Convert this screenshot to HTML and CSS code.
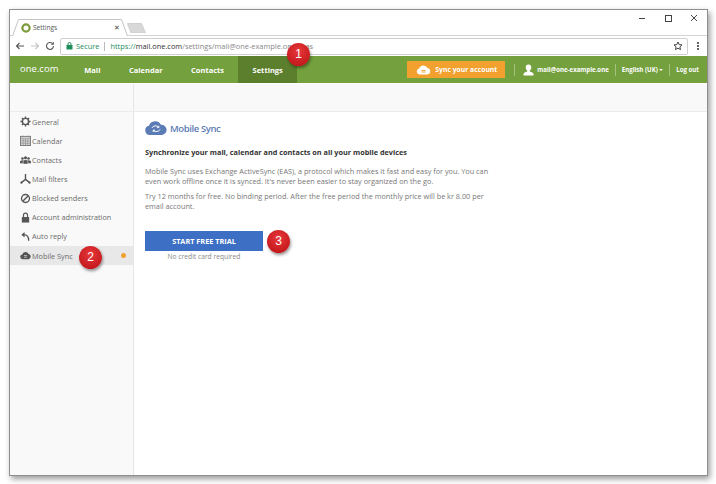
FILE: index.html
```html
<!DOCTYPE html>
<html>
<head>
  <meta charset="utf-8">
  <title>Settings</title>
  <link rel="stylesheet" href="styles.css">
</head>
<body>
  <div class="window">

    <!-- browser tabs -->
    <div class="titlebar">
      <div class="tab">
        <svg class="tab-shape" width="116" height="17" viewBox="0 0 116 17"><path d="M0.500 17L6.500 0.500H109.500L115.500 17" fill="#fff" stroke="#c4c4c4"/></svg>
        <svg class="tab-icon" width="10" height="10" viewBox="0 0 10 10"><circle cx="5" cy="5" r="3.600" fill="none" stroke="#7a9a3c" stroke-width="2.200"/></svg>
        <span class="tab-title">Settings</span>
        <span class="tab-close">&#10005;</span>
      </div>
      <svg class="tab-new" width="19" height="10" viewBox="0 0 19 10"><path d="M4 10L0.500 0.500H14.500L18.500 10z" fill="#d8d8d8" stroke="#cfcfcf"/></svg>
      <div class="win-controls">
        <svg width="8" height="8" viewBox="0 0 8 8"><path d="M1 4.500h6" stroke="#444" fill="none"/></svg>
        <svg width="8" height="8" viewBox="0 0 8 8"><rect x="1.500" y="1.500" width="6" height="6" stroke="#444" fill="none"/></svg>
        <svg width="8" height="8" viewBox="0 0 8 8"><path d="M1 1l6 6M7 1l-6 6" stroke="#444" fill="none"/></svg>
      </div>
    </div>

    <!-- address bar -->
    <div class="toolbar">
      <svg class="tool-icon" width="10" height="10" viewBox="0 0 10 10"><path d="M9 5H1.500M4.500 2L1.500 5l3 3" stroke="#555" stroke-width="1.100" fill="none"/></svg>
      <svg class="tool-icon" width="10" height="10" viewBox="0 0 10 10"><path d="M1 5h7.500M5.500 2l3 3-3 3" stroke="#c4c4c4" stroke-width="1.100" fill="none"/></svg>
      <svg class="tool-icon" width="10" height="10" viewBox="0 0 10 10"><path d="M8.500 5A3.500 3.500 0 1 1 7.400 2.400" stroke="#555" stroke-width="1.100" fill="none"/><path d="M8.800 0.800v3H5.800z" fill="#555"/></svg>
      <div class="omnibox">
        <svg width="7" height="8" viewBox="0 0 7 8"><rect x="0.500" y="3" width="6" height="4.500" fill="#1e8e5a"/><path d="M2 3V2a1.500 1.500 0 0 1 3 0v1" stroke="#1e8e5a" fill="none"/></svg>
        <span class="secure">Secure</span>
        <span class="omni-sep"></span>
        <span class="url"><span class="scheme">https://</span><span class="host">mail.one.com</span>/settings/mail@one-example.one/mas</span>
        <svg class="star" width="10" height="10" viewBox="0 0 10 10"><path d="M5 1l1.200 2.600 2.800.3-2.100 1.900.6 2.800L5 7.200 2.500 8.600l.6-2.800L1 3.900l2.800-.3z" stroke="#444" fill="none"/></svg>
      </div>
      <div class="menu-dots"><i></i><i></i><i></i></div>
    </div>

    <!-- green app nav -->
    <div class="appnav">
      <div class="logo">one.com</div>
      <a class="nav-item">Mail</a>
      <a class="nav-item">Calendar</a>
      <a class="nav-item">Contacts</a>
      <a class="nav-item active">Settings</a>
      <div class="nav-right">
        <div class="sync-btn">
          <svg width="15" height="11" viewBox="0 0 15 11"><path d="M3.500 10.500a3 3 0 0 1-.4-5.900A4.500 4.500 0 0 1 11.500 4a3.300 3.300 0 0 1 0 6.500z" fill="#fff"/><path d="M5.500 6.500h4M5.500 8h4" stroke="#f2a02e" stroke-width="0.900"/></svg>
          <span>Sync your account</span>
        </div>
        <span class="nav-sep first"></span>
        <svg class="user-icon" width="11" height="12" viewBox="0 0 11 12"><path d="M5.500 0.500c1.800 0 2.800 1.300 2.800 3 0 1.300-.7 2.500-1.500 3.100v.9c1.700.5 3.700 1.200 3.700 2.500v1.500H0.500V10c0-1.300 2-2 3.700-2.500v-.9C3.400 6 2.700 4.800 2.700 3.500c0-1.700 1-3 2.800-3z" fill="#fff"/></svg>
        <span class="nav-link user">mail@one-example.one</span>
        <span class="nav-sep"></span>
        <span class="nav-link">English (UK) <span class="caret"></span></span>
        <span class="nav-sep"></span>
        <span class="nav-link">Log out</span>
      </div>
    </div>

    <div class="subbar"><div class="subbar-left"></div></div>

    <div class="main">
      <ul class="sidebar">
        <li>
          <svg viewBox="0 0 12 12"><circle cx="6" cy="6" r="3.400" fill="none" stroke="#555" stroke-width="1.600"/><path d="M6 .5v2M6 9.500v2M.5 6h2M9.500 6h2M2.100 2.100l1.400 1.400M8.500 8.500l1.400 1.400M9.900 2.100L8.500 3.500M3.500 8.500L2.100 9.900" stroke="#555" stroke-width="1.500"/></svg>
          General
        </li>
        <li>
          <svg viewBox="0 0 12 12"><rect x=".5" y="1.500" width="11" height="10" fill="#d4d4d4" stroke="#777"/><path d="M.5 4h11M3 .5v2M9 .5v2M3.500 4v7M6 4v7M8.500 4v7M1 6.500h10M1 9h10" stroke="#888" stroke-width=".6"/></svg>
          Calendar
        </li>
        <li>
          <svg viewBox="0 0 12 12"><circle cx="2.700" cy="5" r="1.400" fill="#555"/><circle cx="9.300" cy="5" r="1.400" fill="#555"/><circle cx="6" cy="4.200" r="1.700" fill="#555"/><path d="M0 10v-1.500c0-1 1-1.800 2.700-1.800h6.600c1.700 0 2.700.8 2.700 1.800V10z" fill="#555"/><path d="M3.500 10.500V8c0-1 1.100-1.800 2.500-1.800S8.500 7 8.500 8v2.500" fill="#555" stroke="#f9f9f9" stroke-width=".6"/></svg>
          Contacts
        </li>
        <li>
          <svg viewBox="0 0 12 12"><path d="M6 1v6L1.500 10.500M6 7l4.500 3.500" stroke="#555" stroke-width="1.500" fill="none"/><circle cx="1.500" cy="10.500" r="1.200" fill="#555"/><circle cx="10.500" cy="10.500" r="1.200" fill="#555"/></svg>
          Mail filters
        </li>
        <li>
          <svg viewBox="0 0 12 12"><circle cx="6" cy="6" r="4.300" fill="none" stroke="#555" stroke-width="1.500"/><path d="M3 9l6-6" stroke="#555" stroke-width="1.500"/></svg>
          Blocked senders
        </li>
        <li>
          <svg viewBox="0 0 12 12"><rect x="2" y="5.500" width="8" height="6" fill="#555"/><path d="M3.800 5.500V3.500a2.200 2.200 0 0 1 4.400 0v2" stroke="#555" stroke-width="1.300" fill="none"/></svg>
          Account administration
        </li>
        <li>
          <svg viewBox="0 0 12 12"><path d="M1.500 4L5 1v6z" fill="#555"/><path d="M4 4c3.500 0 5.500 1.500 5.500 6.500" stroke="#555" stroke-width="1.500" fill="none"/></svg>
          Auto reply
        </li>
        <li class="current">
          <svg viewBox="0 0 12 12"><path d="M3 10a2.500 2.500 0 0 1-.5-5A3.700 3.700 0 0 1 9.400 4.300 2.900 2.900 0 0 1 9.300 10z" fill="#555"/><path d="M4.500 6h3M4.500 7.800h3" stroke="#e6e6e6" stroke-width=".8"/></svg>
          Mobile Sync
          <span class="dot"></span>
        </li>
      </ul>

      <div class="content">
        <h1 class="page-title">
          <svg width="22" height="14" viewBox="0 0 22 14"><path d="M5 14a4.700 4.700 0 0 1-1-9.300A6.500 6.500 0 0 1 15.900 3.800 5.100 5.100 0 0 1 17 14z" fill="#5b7cb5"/><path d="M7 7c.8-2.300 5-3 6.800-.8M13.800 4.800v1.800H12M15 8.500c-1 2.200-5 2.800-6.800.7M8.200 11V9.200H10" stroke="#fff" stroke-width="1" fill="none"/></svg>
          Mobile Sync
        </h1>
        <p class="lead">Synchronize your mail, calendar and contacts on all your mobile devices</p>
        <p class="text">Mobile Sync uses Exchange ActiveSync (EAS), a protocol which makes it fast and easy for you. You can even work offline once it is synced. It's never been easier to stay organized on the go.</p>
        <p class="text">Try 12 months for free. No binding period. After the free period the monthly price will be kr 8.00 per email account.</p>
        <div class="trial">
          <div class="trial-btn">START FREE TRIAL</div>
          <div class="trial-note">No credit card required</div>
        </div>
      </div>
    </div>

    <span class="badge badge-1">1</span>
    <span class="badge badge-2">2</span>
    <span class="badge badge-3">3</span>
  </div>
</body>
</html>
```

FILE: styles.css
```css
/* Page and window frame */

html, body {
  margin: 0;
  height: 100%;
  background: #fff;
}

body {
  padding: 9px 8px 8px 9px;
  box-sizing: border-box;
  font-family: "Open Sans", sans-serif;
}

.window {
  position: relative;
  height: 467px;
  display: flex;
  flex-direction: column;
  background: #fff;
  border: 1px solid #8f8f8f;
  box-sizing: border-box;
  box-shadow: 2px 3px 6px rgba(0,0,0,.4);
  overflow: visible;
}

/* Browser tabs */

.titlebar {
  height: 25px;
  display: flex;
  align-items: flex-end;
  padding-left: 2px;
  border-bottom: 1px solid #d4d4d4;
  position: relative;
}

.tab {
  position: relative;
  width: 116px;
  height: 17px;
  margin-bottom: -1px;
  padding: 0 8px 0 9px;
  box-sizing: border-box;
  display: flex;
  align-items: center;
  gap: 2px;
  font-size: 6.5px;
  color: #555;
}

.tab-shape {
  position: absolute;
  left: 0;
  top: 0;
}

.tab-icon, .tab-title, .tab-close {
  position: relative;
}

.tab-title {
  flex: 1;
}

.tab-close {
  font-size: 7px;
  color: #444;
}

.tab-new {
  margin: 0 0 2px -1px;
}

.win-controls {
  position: absolute;
  top: 4px;
  right: 9px;
  display: flex;
  gap: 18px;
}

/* Address bar */

.toolbar {
  height: 20px;
  display: flex;
  align-items: center;
  padding: 0 4px 0 5px;
  gap: 5px;
}

.tool-icon {
  flex: none;
}

.omnibox {
  flex: 1;
  height: 15px;
  padding: 0 4px 0 5px;
  display: flex;
  align-items: center;
  gap: 3px;
  background: #fff;
  border: 1px solid #cfcfcf;
  border-radius: 2px;
  font-size: 7.4px;
}

.secure {
  color: #1e8e5a;
}

.omni-sep {
  width: 1px;
  height: 9px;
  margin: 0 2px;
  background: #bbb;
}

.url {
  flex: 1;
  color: #888;
}

.scheme {
  color: #1e8e5a;
}

.host {
  color: #333;
}

.menu-dots {
  display: flex;
  flex-direction: column;
  gap: 1px;
  margin: 0 4px 0 4px;
}

.menu-dots i {
  width: 2px;
  height: 2px;
  background: #666;
}

/* Green app nav */

.appnav {
  height: 27px;
  display: flex;
  align-items: stretch;
  background: #74a03e;
  color: #fff;
  font-weight: 700;
  font-size: 7.5px;
}

.logo {
  width: 60px;
  padding-left: 10px;
  box-sizing: border-box;
  align-self: center;
  font-size: 9.5px;
  font-weight: 400;
  margin-top: -2px;
}

.nav-item {
  padding: 0 14.25px;
  display: flex;
  align-items: center;
}

.nav-item.active {
  background: #5c7f2d;
}

.nav-right {
  margin-left: auto;
  display: flex;
  align-items: center;
  padding-right: 8px;
}

.sync-btn {
  width: 98px;
  height: 17px;
  margin-right: 9px;
  padding-left: 9px;
  box-sizing: border-box;
  display: flex;
  align-items: center;
  gap: 4px;
  background: #f2a02e;
  font-size: 6.8px;
}

.nav-sep {
  width: 1px;
  height: 12px;
  margin: 0 6px;
  background: #a4c27c;
}

.nav-sep.first {
  margin: 0 8px 0 0;
}

.user-icon {
  margin-right: 3px;
}

.nav-link {
  font-size: 6.1px;
}

.caret {
  display: inline-block;
  border: 2px solid transparent;
  border-top-color: #fff;
  border-bottom: 0;
  vertical-align: 1px;
}

/* Sub header strip */

.subbar {
  height: 29px;
  background: #f9f9f9;
  border-top: 1px solid #fff;
  border-bottom: 1px solid #ececec;
  box-sizing: border-box;
}

.subbar-left {
  width: 123px;
  height: 100%;
  border-right: 1px solid #e6e6e6;
}

/* Sidebar + content */

.main {
  flex: 1;
  display: flex;
}

.sidebar {
  width: 123px;
  margin: 0;
  padding: 0;
  list-style: none;
  background: #f9f9f9;
  border-right: 1px solid #e6e6e6;
  font-size: 7.3px;
  color: #6b6b6b;
}

.sidebar li {
  height: 19.15px;
  display: flex;
  align-items: center;
  padding-left: 10px;
}

.sidebar li svg {
  width: 11px;
  height: 11px;
  margin-right: 1px;
}

.sidebar li.current {
  background: #e8e8e8;
  position: relative;
}

.dot {
  position: absolute;
  right: 7px;
  top: 7px;
  width: 5px;
  height: 5px;
  border-radius: 50%;
  background: #f2a02e;
}

.content {
  flex: 1;
  padding: 9px 11px;
}

.page-title {
  margin: 0;
  display: flex;
  align-items: center;
  gap: 3px;
  font-size: 9.5px;
  letter-spacing: -.4px;
  font-weight: 600;
  color: #5b7cb5;
  height: 14px;
}

.lead {
  margin: 11px 0 0;
  font-size: 7.3px;
  font-weight: 700;
  color: #333;
  line-height: 12px;
}

.text {
  width: 350px;
  margin: 8px 0 0;
  font-size: 7.3px;
  color: #777;
  line-height: 10px;
}

.text + .text {
  margin-top: 5px;
}

.trial {
  width: 118px;
  margin-top: 20px;
  text-align: center;
}

.trial-btn {
  height: 20px;
  line-height: 20px;
  background: #3d6fc4;
  color: #fff;
  font-size: 7.3px;
  font-weight: 700;
}

.trial-note {
  margin-top: 1px;
  font-size: 6.7px;
  line-height: 10px;
  color: #888;
}

/* Red callouts laid over the screenshot */

.badge {
  position: absolute;
  width: 23px;
  height: 23px;
  line-height: 23px;
  text-align: center;
  border-radius: 50%;
  background: radial-gradient(circle at 50% 35%, #e8383a, #b80f14);
  color: #fff;
  font-family: "Liberation Sans", sans-serif;
  font-size: 12px;
  box-shadow: 1px 2px 3px rgba(0,0,0,.4);
}

.badge-1 { left: 277px; top: 33px; }
.badge-2 { left: 69px; top: 236px; }
.badge-3 { left: 257px; top: 220px; }
```
